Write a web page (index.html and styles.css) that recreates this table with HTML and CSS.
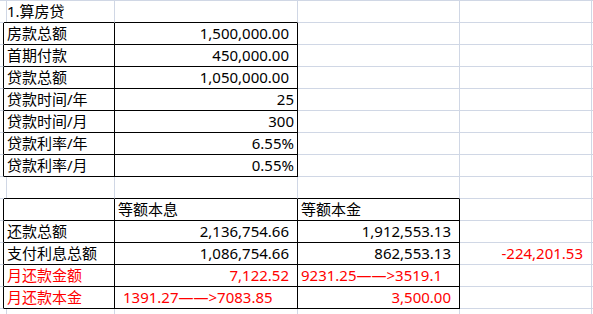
FILE: index.html
```html
<!DOCTYPE html>
<html lang="zh">
<head>
<meta charset="utf-8">
<title>算房贷</title>
<link rel="stylesheet" href="styles.css">
</head>
<body>
<div class="sheet">
  <div class="c"></div><div class="c bt">1.算房贷</div><div class="c bt"></div><div class="c"></div><div class="c"></div><div class="c e"></div>

  <div class="c bl"></div><div class="c b">房款总额</div><div class="c b r dec">1,500,000.00</div><div class="c"></div><div class="c"></div><div class="c e"></div>
  <div class="c bl"></div><div class="c b">首期付款</div><div class="c b r dec">450,000.00</div><div class="c"></div><div class="c"></div><div class="c e"></div>
  <div class="c bl"></div><div class="c b">贷款总额</div><div class="c b r dec">1,050,000.00</div><div class="c"></div><div class="c"></div><div class="c e"></div>
  <div class="c bl"></div><div class="c b">贷款时间/年</div><div class="c b r">25</div><div class="c"></div><div class="c"></div><div class="c e"></div>
  <div class="c bl"></div><div class="c b">贷款时间/月</div><div class="c b r">300</div><div class="c"></div><div class="c"></div><div class="c e"></div>
  <div class="c bl"></div><div class="c b">贷款利率/年</div><div class="c b r">6.55%</div><div class="c"></div><div class="c"></div><div class="c e"></div>
  <div class="c bl"></div><div class="c b">贷款利率/月</div><div class="c b r">0.55%</div><div class="c"></div><div class="c"></div><div class="c e"></div>

  <div class="c"></div><div class="c bt"></div><div class="c bt"></div><div class="c bt"></div><div class="c"></div><div class="c e"></div>

  <div class="c bl"></div><div class="c b"></div><div class="c b">等额本息</div><div class="c b">等额本金</div><div class="c"></div><div class="c e"></div>
  <div class="c bl"></div><div class="c b">还款总额</div><div class="c b r dec">2,136,754.66</div><div class="c b r dec">1,912,553.13</div><div class="c"></div><div class="c e"></div>
  <div class="c bl"></div><div class="c b">支付利息总额</div><div class="c b r dec">1,086,754.66</div><div class="c b r dec">862,553.13</div><div class="c r dec red">-224,201.53</div><div class="c e"></div>
  <div class="c bl"></div><div class="c b red">月还款金额</div><div class="c b r dec red">7,122.52</div><div class="c b red">9231.25——&gt;3519.1</div><div class="c"></div><div class="c e"></div>
  <div class="c bl"></div><div class="c b red">月还款本金</div><div class="c b red ind">1391.27——&gt;7083.85</div><div class="c b r dec red">3,500.00</div><div class="c"></div><div class="c e"></div>

  <div class="c"></div><div class="c"></div><div class="c"></div><div class="c"></div><div class="c"></div><div class="c e"></div>
</div>
</body>
</html>
```

FILE: styles.css
```css
html, body {
  margin: 0;
  padding: 0;
  background: #ffffff;
}

body {
  font-family: "Noto Sans", "Noto Sans CJK SC", sans-serif;
  font-size: 15px;
  color: #000000;
  overflow: hidden;
}

.sheet {
  display: grid;
  grid-template-columns: 4px 111px 183px 162px 132px 1fr;
  grid-auto-rows: 22px;
  height: 313px;
  overflow: hidden;
  border-top: 1px solid #d0d7e5;
}

.c {
  box-sizing: border-box;
  border-right: 1px solid #d0d7e5;
  border-bottom: 1px solid #d0d7e5;
  padding: 0 3px;
  line-height: 21px;
  white-space: nowrap;
  overflow: hidden;
}

.e {
  border-right: 0;
  padding: 0;
}

.b {
  border-right-color: #000000;
  border-bottom-color: #000000;
}

.bt {
  border-bottom-color: #000000;
}

.bl {
  border-right-color: #000000;
  padding: 0;
}

.r {
  text-align: right;
}

.dec {
  padding-right: 8px;
}

.red {
  color: #ff0000;
}

.ind {
  padding-left: 8px;
}
```
